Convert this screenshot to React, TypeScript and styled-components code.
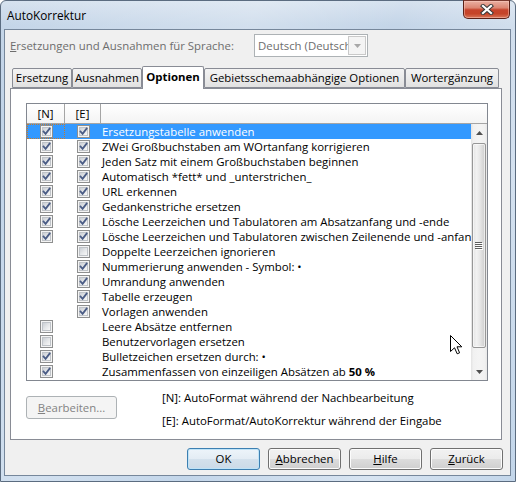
import React from "react";
import styled, { createGlobalStyle } from "styled-components";

const Global = createGlobalStyle`
  html, body { margin: 0; padding: 0; background: #ffffff; }
  body { width: 516px; height: 482px; overflow: hidden; }
  * { box-sizing: border-box; }
`;

const Window = styled.div`
  position: relative;
  width: 516px;
  height: 482px;
  display: flex;
  flex-direction: column;
  padding: 0 4px 5px 3px;
  border: 1px solid #5b6c80;
  border-radius: 6px 6px 0 0;
  background:
    linear-gradient(115deg, rgba(255,255,255,0) 0%, rgba(255,255,255,0.25) 35%, rgba(255,255,255,0) 55%, rgba(255,255,255,0.35) 80%, rgba(255,255,255,0) 100%),
    linear-gradient(180deg, #d6e2ef 0%, #c4d5e8 5%, #bdd1e7 30%, #c3d6ea 100%);
  font-family: "Open Sans", "Noto Sans", sans-serif;
  font-size: 11.4px;
  color: #000;
`;

const TitleBar = styled.div`
  height: 28px;
  display: flex;
  align-items: flex-start;
`;

const Title = styled.div`
  flex: 1;
  padding-left: 3px;
  line-height: 28px;
  font-size: 11.8px;
  color: #000;
`;

const CloseButton = styled.div`
  width: 47px;
  height: 19px;
  margin-top: -1px;
  margin-right: 1px;
  border: 1px solid #5a2118;
  border-top-color: #7a3a30;
  border-radius: 0 0 5px 5px;
  background: linear-gradient(180deg, #eab0a2 0%, #dc8673 40%, #c6442c 52%, #c54428 75%, #d9775a 100%);
  box-shadow: inset 0 0 0 1px rgba(255, 210, 200, 0.45);
  display: flex;
  align-items: center;
  justify-content: center;
`;

const Client = styled.div`
  flex: 1;
  display: flex;
  flex-direction: column;
  border: 1px solid #76879b;
  background: #f0f0f0;
`;

const LangRow = styled.div`
  margin-top: 4px;
  padding-left: 5px;
  display: flex;
  align-items: center;
  height: 23px;
`;

const LangLabel = styled.div`
  flex: 0 0 244px;
  color: #6d6d6d;
  white-space: nowrap;
`;

const Combo = styled.div`
  width: 114px;
  height: 23px;
  border: 1px solid #adb2b5;
  background: #fff;
  display: flex;
  align-items: flex-start;
`;

const ComboText = styled.div`
  flex: 1;
  overflow: hidden;
  white-space: nowrap;
  color: #6d6d6d;
  padding-left: 3px;
  line-height: 21px;
`;

const ComboButton = styled.div`
  width: 18px;
  height: 19px;
  margin: 1px 1px 0 0;
  border: 1px solid #c9c9c9;
  background: #f4f4f4;
  display: flex;
  align-items: center;
  justify-content: center;
`;

const TabStrip = styled.div`
  margin: 9px 8px 0 5px;
  padding-left: 2px;
  height: 22px;
  display: flex;
  align-items: flex-end;
  position: relative;
  z-index: 1;
`;

const Tab = styled.div<{ $w: number; $active?: boolean }>`
  width: ${(p) => p.$w}px;
  height: ${(p) => (p.$active ? 23 : 20)}px;
  margin-bottom: ${(p) => (p.$active ? -1 : 0)}px;
  border: 1px solid #898c95;
  border-bottom: ${(p) => (p.$active ? "none" : "1px solid #898c95")};
  border-radius: 2px 2px 0 0;
  background: ${(p) => (p.$active ? "#ffffff" : "linear-gradient(180deg, #f3f3f3 0%, #ebebeb 50%, #e1e1e1 100%)")};
  font-weight: ${(p) => (p.$active ? 700 : 400)};
  text-align: center;
  line-height: ${(p) => (p.$active ? 20 : 18)}px;
  white-space: nowrap;
  overflow: hidden;
`;

const Panel = styled.div`
  margin: 0 8px 0 5px;
  height: 352px;
  border: 1px solid #898c95;
  background: #ffffff;
  padding: 14px 0 0 15px;
  display: flex;
  flex-direction: column;
`;

const ListBox = styled.div`
  width: 462px;
  height: 278px;
  border: 1px solid #828790;
  display: flex;
  flex-direction: column;
  background: #fff;
`;

const Header = styled.div`
  height: 20px;
  display: flex;
  border-bottom: 1px solid #a5a5a5;
  background: linear-gradient(180deg, #ffffff 0%, #f4f4f4 100%);
`;

const HeadCell = styled.div<{ $w?: number }>`
  ${(p) => (p.$w ? `flex: 0 0 ${p.$w}px;` : "flex: 1;")}
  border-right: ${(p) => (p.$w ? "1px solid #a5a5a5" : "none")};
  text-align: center;
  line-height: 19px;
`;

const ListBody = styled.div`
  flex: 1;
  display: flex;
  overflow: hidden;
`;

const Rows = styled.div`
  flex: 1;
  display: flex;
  flex-direction: column;
  overflow: hidden;
`;

const Row = styled.div<{ $selected?: boolean }>`
  height: 15px;
  flex: 0 0 15px;
  display: flex;
  align-items: center;
  background: ${(p) => (p.$selected ? "#3399ff" : "transparent")};
  color: ${(p) => (p.$selected ? "#ffffff" : "#000000")};
`;

const CheckCell = styled.div<{ $w: number; $focus?: boolean }>`
  flex: 0 0 ${(p) => p.$w}px;
  height: 15px;
  display: flex;
  align-items: center;
  justify-content: center;
  outline: ${(p) => (p.$focus ? "1px dotted #c87a2a" : "none")};
  outline-offset: -1px;
`;

const RowText = styled.div`
  flex: 1;
  white-space: nowrap;
  overflow: hidden;
  line-height: 15px;
  padding-left: 1px;
`;

const Box = styled.div`
  width: 13px;
  height: 13px;
  border: 1px solid #8e8f8f;
  background: #f4f4f4;
  padding: 1px;
`;

const BoxInner = styled.div`
  width: 9px;
  height: 9px;
  background: linear-gradient(135deg, #cbcfd5 0%, #e4e6e8 50%, #f8f8f8 100%);
  border: 1px solid #bfc3c8;
  position: relative;
`;

const ScrollBar = styled.div`
  flex: 0 0 16px;
  display: flex;
  flex-direction: column;
  background: linear-gradient(90deg, #e3e3e3 0%, #f1f1f1 15%, #f4f4f4 50%, #f1f1f1 85%, #e8e8e8 100%);
`;

const Arrow = styled.div`
  height: 17px;
  flex: 0 0 17px;
  display: flex;
  align-items: center;
  justify-content: center;
`;

const Thumb = styled.div`
  margin: 2px 1px 0 1px;
  height: 205px;
  border: 1px solid #979797;
  border-radius: 2px;
  background: linear-gradient(90deg, #e4e4e4 0%, #f2f2f2 30%, #e8e8e8 55%, #d6d6d6 85%, #cdcdcd 100%);
  box-shadow: inset 0 0 0 1px rgba(255, 255, 255, 0.6);
  display: flex;
  align-items: center;
  justify-content: center;
`;

const Spacer = styled.div`
  flex: 1;
`;

const BottomRow = styled.div`
  display: flex;
  align-items: flex-start;
  margin-top: 5px;
`;

const EditButton = styled.div`
  margin-top: 10px;
  width: 91px;
  height: 23px;
  border: 1px solid #adb2b5;
  border-radius: 3px;
  background: #f4f4f4;
  color: #838383;
  text-align: center;
  line-height: 21px;
`;

const Legend = styled.div`
  margin-left: 45px;
  display: flex;
  flex-direction: column;
`;

const LegendLine = styled.div`
  line-height: 23px;
  white-space: nowrap;
`;

const ButtonRow = styled.div`
  margin-top: 8px;
  padding-right: 7px;
  display: flex;
  justify-content: flex-end;
  gap: 8px;
`;

const Button = styled.div<{ $default?: boolean }>`
  width: 73px;
  height: 22px;
  border: 1px solid ${(p) => (p.$default ? "#3c7fb1" : "#707070")};
  border-radius: 3px;
  background: ${(p) =>
    p.$default
      ? "linear-gradient(180deg, #edf4fa 0%, #e3ecf4 50%, #d4e1ec 50%, #cbdae8 100%)"
      : "linear-gradient(180deg, #f2f2f2 0%, #ebebeb 50%, #dddddd 50%, #cfcfcf 100%)"};
  box-shadow: inset 0 0 0 1px ${(p) => (p.$default ? "#bfe3f7" : "#fcfcfc")};
  text-align: center;
  line-height: 20px;
`;

const Cursor = styled.svg`
  position: absolute;
  left: 449px;
  top: 334px;
`;

function CheckBox({ checked }: { checked: boolean }) {
  return (
    <Box>
      <BoxInner>
        {checked && (
          <svg width="9" height="9" viewBox="0 0 9 9" style={{ position: "absolute", left: -1, top: -1, overflow: "visible" }}>
            <path d="M1.6 4.6 L3.6 6.8 L7.6 1.6" fill="none" stroke="#4a5c85" strokeWidth="1.8" strokeLinecap="square" />
          </svg>
        )}
      </BoxInner>
    </Box>
  );
}

type Item = { n: boolean | null; e: boolean | null; label: React.ReactNode };

const items: Item[] = [
  { n: true, e: true, label: "Ersetzungstabelle anwenden" },
  { n: true, e: true, label: "ZWei Großbuchstaben am WOrtanfang korrigieren" },
  { n: true, e: true, label: "Jeden Satz mit einem Großbuchstaben beginnen" },
  { n: true, e: true, label: "Automatisch *fett* und _unterstrichen_" },
  { n: true, e: true, label: "URL erkennen" },
  { n: true, e: true, label: "Gedankenstriche ersetzen" },
  { n: true, e: true, label: "Lösche Leerzeichen und Tabulatoren am Absatzanfang und -ende" },
  { n: true, e: true, label: "Lösche Leerzeichen und Tabulatoren zwischen Zeilenende und -anfang" },
  { n: null, e: false, label: "Doppelte Leerzeichen ignorieren" },
  { n: null, e: true, label: "Nummerierung anwenden - Symbol: •" },
  { n: null, e: true, label: "Umrandung anwenden" },
  { n: null, e: true, label: "Tabelle erzeugen" },
  { n: null, e: true, label: "Vorlagen anwenden" },
  { n: false, e: null, label: "Leere Absätze entfernen" },
  { n: false, e: null, label: "Benutzervorlagen ersetzen" },
  { n: true, e: null, label: "Bulletzeichen ersetzen durch: •" },
  {
    n: true,
    e: null,
    label: (
      <>
        Zusammenfassen von einzeiligen Absätzen ab <b>50 %</b>
      </>
    ),
  },
];

export default function App() {
  return (
    <>
      <Global />
      <Window>
        <TitleBar>
          <Title>AutoKorrektur</Title>
          <CloseButton>
            <svg width="14" height="11" viewBox="0 0 14 11">
              <path d="M3 2 L11 9 M11 2 L3 9" stroke="#3a3a3a" strokeWidth="4.2" strokeLinecap="square" />
              <path d="M3 2 L11 9 M11 2 L3 9" stroke="#ffffff" strokeWidth="2.2" strokeLinecap="square" />
            </svg>
          </CloseButton>
        </TitleBar>
        <Client>
          <LangRow>
            <LangLabel>
              <u>E</u>rsetzungen und Ausnahmen für Sprache:
            </LangLabel>
            <Combo>
              <ComboText>Deutsch (Deutschland)</ComboText>
              <ComboButton>
                <svg width="7" height="4" viewBox="0 0 7 4">
                  <path d="M0 0 L7 0 L3.5 4 Z" fill="#a8a8a8" />
                </svg>
              </ComboButton>
            </Combo>
          </LangRow>
          <TabStrip>
            <Tab $w={60}>Ersetzung</Tab>
            <Tab $w={70}>Ausnahmen</Tab>
            <Tab $w={62} $active>
              Optionen
            </Tab>
            <Tab $w={201}>Gebietsschemaabhängige Optionen</Tab>
            <Tab $w={94}>Wortergänzung</Tab>
          </TabStrip>
          <Panel>
            <ListBox>
              <Header>
                <HeadCell $w={38}>[N]</HeadCell>
                <HeadCell $w={36}>[E]</HeadCell>
                <HeadCell />
              </Header>
              <ListBody>
                <Rows>
                  {items.map((it, i) => (
                    <Row key={i} $selected={i === 0}>
                      <CheckCell $w={38} $focus={i === 0}>
                        {it.n !== null && <CheckBox checked={it.n} />}
                      </CheckCell>
                      <CheckCell $w={36}>{it.e !== null && <CheckBox checked={it.e} />}</CheckCell>
                      <RowText>{it.label}</RowText>
                    </Row>
                  ))}
                </Rows>
                <ScrollBar>
                  <Arrow>
                    <svg width="7" height="4" viewBox="0 0 7 4">
                      <path d="M0 4 L7 4 L3.5 0 Z" fill="#505050" />
                    </svg>
                  </Arrow>
                  <Thumb>
                    <svg width="8" height="8" viewBox="0 0 8 8">
                      <path d="M0 0.5 H7 M0 2.5 H7 M0 4.5 H7 M0 6.5 H7" stroke="#5d5d5d" strokeWidth="1" />
                      <path d="M1 1.5 H8 M1 3.5 H8 M1 5.5 H8 M1 7.5 H8" stroke="#ffffff" strokeWidth="1" />
                    </svg>
                  </Thumb>
                  <Spacer />
                  <Arrow>
                    <svg width="7" height="4" viewBox="0 0 7 4">
                      <path d="M0 0 L7 0 L3.5 4 Z" fill="#505050" />
                    </svg>
                  </Arrow>
                </ScrollBar>
              </ListBody>
            </ListBox>
            <BottomRow>
              <EditButton>
                <u>B</u>earbeiten...
              </EditButton>
              <Legend>
                <LegendLine>[N]: AutoFormat während der Nachbearbeitung</LegendLine>
                <LegendLine>[E]: AutoFormat/AutoKorrektur während der Eingabe</LegendLine>
              </Legend>
            </BottomRow>
          </Panel>
          <ButtonRow>
            <Button $default>OK</Button>
            <Button>
              <u>A</u>bbrechen
            </Button>
            <Button>
              <u>H</u>ilfe
            </Button>
            <Button>
              <u>Z</u>urück
            </Button>
          </ButtonRow>
        </Client>
        <Cursor width="13" height="20" viewBox="0 0 13 20">
          <path d="M0.5 0.5 L0.5 16.5 L4.5 12.8 L7.2 18.8 L9.6 17.8 L7 11.8 L11.8 11.8 Z" fill="#ffffff" stroke="#000000" strokeWidth="1" strokeLinejoin="miter" />
        </Cursor>
      </Window>
    </>
  );
}
